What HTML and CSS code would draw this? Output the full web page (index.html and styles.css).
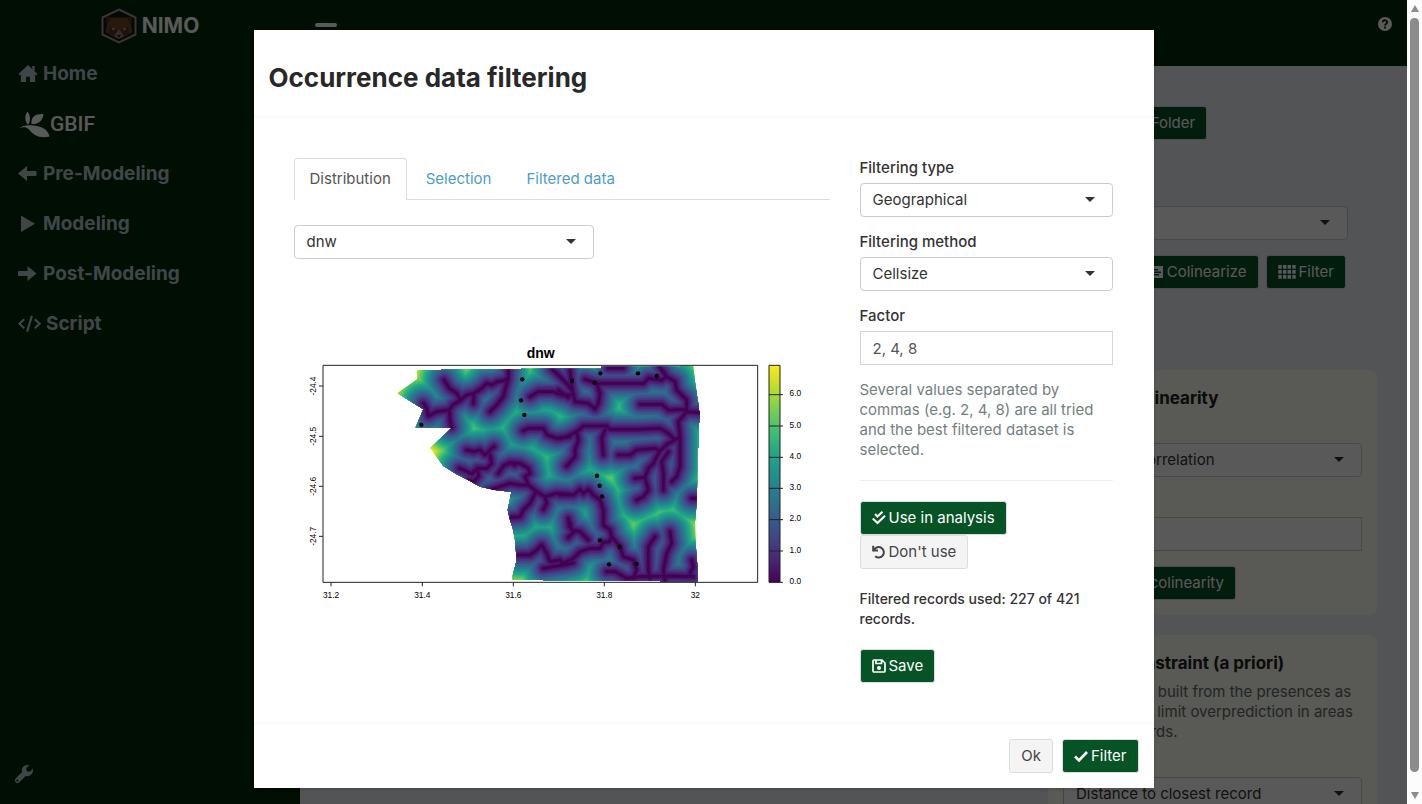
FILE: index.html
```html
<!DOCTYPE html>
<html lang="en">
<head>
<meta charset="utf-8">
<meta name="viewport" content="width=device-width, initial-scale=1">
<title>NIMO</title>
<link rel="stylesheet" href="styles.css">
</head>
<body>
<div class="window">
  <div class="app">
    <aside class="sidebar">
      <div class="brand">
        <svg class="brand-logo" viewBox="0 0 36 36" aria-hidden="true">
          <path d="M18 1.500 34.500 9.500V26.500L18 34.500 1.500 26.500V9.500Z" fill="#0b1a10" stroke="#a89490" stroke-width="2"/>
          <path d="M5 13 6 9 10 9.500 26 9.500 30 9 31 13 30 17 31.500 24 25 28 18 31 11 28 4.500 24 6 17Z" fill="#744629"/>
          <path d="M5 10 9 10 8 14 6 17ZM31 10 27 10 28 14 30 17Z" fill="#4c2d20"/>
          <path d="M9 19 16 21 14 28 8 26ZM27 19 20 21 22 28 28 26Z" fill="#573328"/>
          <path d="M18 21 23 28 18 31 13 28Z" fill="#9d7c6c"/>
          <path d="M16 27h4l-2 2.500Z" fill="#111"/>
          <circle cx="12.500" cy="21" r="1.300" fill="#b8a18f"/><circle cx="23.500" cy="21" r="1.300" fill="#b8a18f"/>
        </svg>
        <span>NIMO</span>
      </div>
      <nav class="menu">
        <a href="#home"><svg class="icon-md" viewBox="0 0 21 20" aria-hidden="true"><path d="M10.500 0.500 20.500 10 19 11.500 18 10.600V18.500H12.500V13H8.500V18.500H3V10.600L2 11.500 0.500 10ZM15 1.500h2.500V7L15 4.500Z"/></svg>Home</a>
        <a href="#gbif" class="gbif"><svg class="icon-gbif" viewBox="0 0 32 27" aria-hidden="true"><path d="M10 14C6 9 7 4 9.500 0.500 13 5 12.500 10 10 14ZM13.500 13C13 6 17 2.500 25.500 3 25 10 20 13.500 13.500 13ZM0.500 17.500C4 14.500 10 13.500 15 14.500 23 15 30 18 31.500 25.500 22 28 15 24 11 18.500 8 15.500 4 16 0.500 17.500Z"/></svg>GBIF</a>
        <a href="#pre"><svg class="icon-md" viewBox="0 0 20 20" aria-hidden="true"><path d="M0 9.500 9 2v5h8.500q1 0 1 1v3q0 1-1 1H9v5Z"/></svg>Pre-Modeling</a>
        <a href="#modeling"><svg class="icon-md" viewBox="0 0 20 20" aria-hidden="true"><path d="M3 1.500V18L17 9.700Z"/></svg>Modeling</a>
        <a href="#post"><svg class="icon-md" viewBox="0 0 20 20" aria-hidden="true"><path d="M18.500 9.500 9.500 2v5H1q-1 0-1 1v3q0 1 1 1h8.500v5Z"/></svg>Post-Modeling</a>
        <a href="#script"><svg class="icon-code" viewBox="0 0 24 20" aria-hidden="true"><path d="M6.500 5 1.500 9.700 6.500 14.500M17.500 5 22.500 9.700 17.500 14.500M14.500 1.500 9.500 18" fill="none" stroke="currentColor" stroke-width="2.200"/></svg>Script</a>
      </nav>
      <button class="settings" aria-label="Settings"><svg class="icon-md" viewBox="0 0 20 20" aria-hidden="true"><path fill-rule="evenodd" d="M1.500 14.500 8 8.300Q7 4 10 2 12.500 0.500 15.500 1L12.200 4.300 12.800 7.200 15.700 7.800 19 4.500Q19.500 8 17.500 10.300 15 12.700 11.700 12L5.300 18.300Q3.500 20 1.700 18.300 0 16.500 1.500 14.500ZM3.300 15.500a1 1 0 1 0 .1 0Z"/></svg></button>
    </aside>
    <div class="page">
      <header class="topbar">
        <button class="collapse" aria-label="Toggle menu"></button>
        <button class="help" aria-label="Help"><svg class="icon-sm" viewBox="0 0 14 14" aria-hidden="true"><circle cx="7" cy="7" r="7" fill="currentColor"/><path d="M4.800 5.300C5 2.500 9.400 2.700 9.200 5.300 9 6.700 7 6.700 7 8.400M7 9.600v2" fill="none" stroke="#03290b" stroke-width="1.800"/></svg></button>
      </header>
      <main class="panel">
        <section class="setup">
          <button class="btn primary"><svg class="icon-sm" viewBox="0 0 14 14" aria-hidden="true"><path fill="currentColor" d="M0 2h5l1.500 2H14v8H0Z"/></svg>Choose Folder</button>
          <div class="select setup-select"><select aria-label="Species"><option></option></select></div>
          <div class="actions">
            <button class="btn primary"><svg class="icon-sm" viewBox="0 0 14 14" aria-hidden="true"><path fill="currentColor" fill-rule="evenodd" d="M1 1h12v12H1ZM3 4v1.500h5V4ZM3 6.500V8h8V6.500ZM3 9v1.500h6V9Z"/></svg>Colinearize</button>
            <button class="btn primary"><svg class="icon-grid" viewBox="0 0 18 14" aria-hidden="true"><path d="M2 0v14M6.700 0v14M11.300 0v14M16 0v14" stroke="currentColor" stroke-width="3.400" stroke-dasharray="3.800 1.200"/></svg>Filter</button>
          </div>
        </section>
        <section class="card">
          <h3>Reduce colinearity</h3>
          <div class="select"><select aria-label="Method"><option>Pearson correlation</option></select></div>
          <input class="text-input" type="text" aria-label="Threshold">
          <button class="btn primary"><svg class="icon-sm" viewBox="0 0 14 14" aria-hidden="true"><path fill="currentColor" d="M1 1h12v3H1ZM1 6h12v3H1ZM1 11h12v2H1Z"/></svg>Reduce colinearity</button>
        </section>
        <section class="card">
          <h3>Spatial constraint (a priori)</h3>
          <p>Areas will be built from the presences as<br>predictors to limit overprediction in areas<br>with no records.</p>
          <div class="select"><select aria-label="Constraint"><option>Distance to closest record</option></select></div>
        </section>
      </main>
    </div>
    <div class="overlay">
      <div class="modal" role="dialog" aria-labelledby="dialog-title">
        <header class="modal-head"><h2 id="dialog-title">Occurrence data filtering</h2></header>
        <div class="modal-body">
          <section class="view">
            <div class="tabs" role="tablist">
              <button class="tab active" role="tab" aria-selected="true">Distribution</button>
              <button class="tab" role="tab">Selection</button>
              <button class="tab" role="tab">Filtered data</button>
            </div>
            <div class="select layer"><select aria-label="Layer"><option>dnw</option></select></div>
            <svg class="plot" viewBox="12 0 1608 810" role="img" aria-label="dnw map">
              <defs>
                <clipPath id="region"><path d="M382 90H453V88H693V86H933V80H1170V77H1209L1215 125 1223 180 1227 200V212L1230 214V245L1226 250V320L1222 330V415L1220 480 1217 530 1215 545 1216 600 1220 650 1223 690V725H1110V722H760V719H667V710L680 660 675 600 668 565 660 540 653 510 664 456 615 450 570 440 535 420 500 403 460 378 420 324 485 264H376L400 208 322 160 382 118Z"/></clipPath>
                <linearGradient id="scale" x1="0" y1="1" x2="0" y2="0">
                  <stop offset="0" stop-color="#440154"/><stop offset=".1" stop-color="#482475"/><stop offset=".2" stop-color="#414487"/><stop offset=".3" stop-color="#355f8d"/><stop offset=".4" stop-color="#2a788e"/><stop offset=".5" stop-color="#21918c"/><stop offset=".6" stop-color="#22a884"/><stop offset=".7" stop-color="#44bf70"/><stop offset=".8" stop-color="#7ad151"/><stop offset=".9" stop-color="#bddf26"/><stop offset="1" stop-color="#fde725"/>
                </linearGradient>
                <g id="rivers">
                  <path d="M462 120 478 145 500 160 512 180 488 195 478 210 480 240 485 262M512 180 530 165 552 160 575 145 590 130 605 135 622 125 642 122 655 112V88M552 160 550 190M400 190 410 205 415 228 440 215 478 210M600 215 620 195 640 170 645 150 655 115M700 272 715 265 760 265 772 285 800 295 840 290M720 170 745 155 790 155 815 165 850 165M785 86 802 102 825 125 845 150"/>
                  <path d="M530 330 552 335 570 330 585 345 602 328 612 320M600 345 605 370 590 385 562 385 545 402 522 390 508 385M562 385 566 408 552 425 535 420M625 400 640 378 660 368 690 370 715 385 720 400 705 410 715 435 690 435 660 430 625 442 595 452M660 368 675 375M715 435 740 455 765 470 800 460 840 463M765 470 770 490 760 508M735 460 720 490 700 510 690 530 665 532M685 645 720 645 740 630 755 615 770 640 780 665 810 660 825 675 850 668M760 685 790 680 820 675M835 535 838 560"/>
                  <path transform="translate(810 0)" d="M-5 150 25 172M30 90 35 140 45 185 85 190 105 207 115 190 120 160 110 130 75 118M110 130H250L265 115 305 120 320 110 300 82M145 84H190M320 110 345 125 350 150 380 180V215L420 218M240 193H305L325 210 380 208M380 215 355 245 360 290 345 300 325 280 300 265 230 268H150L140 258H70L50 275 20 290 0 295M50 275 55 300 45 330 45 350 20 378M135 270 125 295 130 345M175 345H210L230 330 285 325 300 332 325 310 345 300M300 332 290 350 280 370 265 385 255 412 225 415M255 412 265 450 250 470 230 480M325 335 305 365 310 400V450M360 290V380L350 410 335 425M410 475H395"/>
                  <path transform="translate(810 0)" d="M0 465 40 465 60 448 70 460 85 448 100 465 120 480 130 510V555L150 570 155 590 180 620 190 650 220 660 230 690 220 715M155 590 148 605 130 608 120 625 90 625 60 635 40 655 0 675M85 600 60 575 35 570 30 548M25 592 45 572M285 590 265 620V690L270 715M330 575 335 610 320 640 310 690 315 722M395 660 400 680 390 700M140 695H165L200 715 240 710 330 708 400 710"/>
                </g>
              </defs>
              <g clip-path="url(#region)">
                <rect x="300" y="60" width="960" height="680" fill="#fde725"/>
                <g class="bands">
                  <use href="#rivers" stroke="#dfe318" stroke-width="182"/>
                  <use href="#rivers" stroke="#bddf26" stroke-width="173"/>
                  <use href="#rivers" stroke="#9bd93c" stroke-width="164"/>
                  <use href="#rivers" stroke="#7ad151" stroke-width="156"/>
                  <use href="#rivers" stroke="#5ec962" stroke-width="147"/>
                  <use href="#rivers" stroke="#44bf70" stroke-width="138"/>
                  <use href="#rivers" stroke="#2fb47c" stroke-width="128"/>
                  <use href="#rivers" stroke="#22a884" stroke-width="119"/>
                  <use href="#rivers" stroke="#1f9e89" stroke-width="110"/>
                  <use href="#rivers" stroke="#21918c" stroke-width="101"/>
                  <use href="#rivers" stroke="#25848e" stroke-width="91"/>
                  <use href="#rivers" stroke="#2a788e" stroke-width="82"/>
                  <use href="#rivers" stroke="#2f6c8e" stroke-width="73"/>
                  <use href="#rivers" stroke="#355f8d" stroke-width="63"/>
                  <use href="#rivers" stroke="#3b528b" stroke-width="54"/>
                  <use href="#rivers" stroke="#414487" stroke-width="44"/>
                  <use href="#rivers" stroke="#463480" stroke-width="35"/>
                  <use href="#rivers" stroke="#482475" stroke-width="26"/>
                  <use href="#rivers" stroke="#471365" stroke-width="16"/>
                  <use href="#rivers" stroke="#440154" stroke-width="8"/>
                </g>
              </g>
              <g class="records">
                <circle cx="697" cy="118" r="6.500"/><circle cx="693" cy="181" r="6.500"/><circle cx="703" cy="225" r="6.500"/><circle cx="394" cy="254" r="6.500"/>
                <circle cx="846" cy="122" r="6.500"/><circle cx="931" cy="100" r="6.500"/><circle cx="915" cy="128" r="6.500"/><circle cx="1044" cy="100" r="6.500"/><circle cx="1100" cy="108" r="6.500"/>
                <circle cx="921" cy="407" r="6.500"/><circle cx="929" cy="437" r="6.500"/><circle cx="936" cy="469" r="6.500"/><circle cx="930" cy="601" r="6.500"/><circle cx="989" cy="621" r="6.500"/><circle cx="957" cy="673" r="6.500"/><circle cx="1039" cy="672" r="6.500"/>
              </g>
              <rect x="1437" y="76" width="33" height="651" fill="url(#scale)"/>
              <path class="axes" d="M99 76H1403V727H99ZM123 727v12M397 727v12M670 727v12M943 727v12M1216 727v12M99 138H87M99 289H87M99 439H87M99 589H87M1437 76h33v651h-33ZM1437 164h42M1437 258h42M1437 352h42M1437 445h42M1437 539h42M1437 633h42M1470 727h9"/>
              <text class="plot-title" x="752" y="54">dnw</text>
              <g class="ticks">
                <text x="123" y="774">31.2</text><text x="397" y="774">31.4</text><text x="670" y="774">31.6</text><text x="943" y="774">31.8</text><text x="1216" y="774">32</text>
                <text transform="translate(77 138) rotate(-90)">-24.4</text><text transform="translate(77 289) rotate(-90)">-24.5</text><text transform="translate(77 439) rotate(-90)">-24.6</text><text transform="translate(77 589) rotate(-90)">-24.7</text>
                <text x="1516" y="169">6.0</text><text x="1516" y="263">5.0</text><text x="1516" y="357">4.0</text><text x="1516" y="450">3.0</text><text x="1516" y="544">2.0</text><text x="1516" y="638">1.0</text><text x="1516" y="732">0.0</text>
              </g>
            </svg>
          </section>
          <section class="options">
            <label for="type">Filtering type</label>
            <div class="select"><select id="type"><option>Geographical</option></select></div>
            <label for="method">Filtering method</label>
            <div class="select"><select id="method"><option>Cellsize</option></select></div>
            <label for="factor">Factor</label>
            <input class="text-input" id="factor" type="text" value="2, 4, 8">
            <p class="hint">Several values separated by commas (e.g. 2, 4, 8) are all tried and the best filtered dataset is selected.</p>
            <hr>
            <button class="btn primary"><svg class="icon-sm" viewBox="0 0 14 14" aria-hidden="true"><path d="M3 3 5.500 5.500 10.500 0.800M0.800 7.500 5.500 12 13 4.800" fill="none" stroke="currentColor" stroke-width="2.200"/></svg>Use in analysis</button>
            <button class="btn plain"><svg class="icon-sm" viewBox="0 0 14 14" aria-hidden="true"><path d="M1.200 0.800V5.500H6M2 5A5.200 5.200 0 1 1 3.200 11.200" fill="none" stroke="currentColor" stroke-width="2"/></svg>Don't use</button>
            <p class="result">Filtered records used: 227 of 421 records.</p>
            <button class="btn primary"><svg class="icon-sm" viewBox="0 0 14 14" aria-hidden="true"><path d="M1 2q0-1 1-1h8l3 3v8q0 1-1 1H2q-1 0-1-1ZM4 1v3.500h5.500V1" fill="none" stroke="currentColor" stroke-width="1.700"/><circle cx="7" cy="9" r="2" fill="currentColor"/></svg>Save</button>
          </section>
        </div>
        <footer class="modal-foot">
          <button class="btn plain">Ok</button>
          <button class="btn primary"><svg class="icon-sm" viewBox="0 0 14 14" aria-hidden="true"><path d="M1 7.500 5 11.500 13 3" fill="none" stroke="currentColor" stroke-width="2.600"/></svg>Filter</button>
        </footer>
      </div>
    </div>
  </div>
  <div class="scrollbar" aria-hidden="true">
    <span class="arrow-up"></span><span class="thumb"></span><span class="arrow-down"></span>
  </div>
</div>
</body>
</html>
```
FILE: styles.css
```css
* { box-sizing: border-box; }

body {
  margin: 0;
  font: 15px/20px Inter, "Open Sans", sans-serif;
  color: #333;
}

button, input, select { font: inherit; color: inherit; }
button { cursor: pointer; }
svg { display: block; }

.window { display: flex; height: 100vh; overflow: hidden; }
.app { position: relative; flex: 1; display: flex; overflow: hidden; }

/* Sidebar */
.sidebar {
  flex: 0 0 300px;
  display: flex;
  flex-direction: column;
  background: #03290b;
  color: #b8c7ce;
}
.brand {
  display: flex;
  align-items: center;
  justify-content: center;
  gap: 5px;
  height: 49px;
  padding-top: 2px;
  color: #fff;
  font-size: 21px;
  font-weight: 700;
}
.brand-logo { width: 36px; height: 36px; }
.menu { display: flex; flex-direction: column; }
.menu a {
  display: flex;
  align-items: center;
  gap: 5px;
  height: 50px;
  padding-left: 18px;
  color: inherit;
  font-size: 19px;
  font-weight: 700;
  text-decoration: none;
}
.menu svg, .settings svg { fill: currentColor; }
.menu .gbif {
  gap: 0;
  color: #fff;
  font-family: Roboto, sans-serif;
  font-size: 21px;
  font-weight: 500;
}
.settings {
  align-self: flex-start;
  margin: auto 0 20px 14px;
  padding: 0;
  border: 0;
  background: none;
}
.icon-sm { width: 14px; height: 14px; }
.icon-md { width: 20px; height: 20px; }
.icon-code { width: 23px; height: 20px; }
.icon-gbif { width: 32px; height: 27px; }
.icon-grid { width: 18px; height: 14px; }

/* Page behind the dialog */
.page { flex: 1; display: flex; flex-direction: column; background: #ecf0f5; }
.topbar {
  flex: none;
  display: flex;
  justify-content: space-between;
  align-items: flex-start;
  height: 66px;
  padding: 17px 15px;
  background: #03290b;
  color: #fff;
}
.topbar button { padding: 0; border: 0; background: none; color: inherit; }
.topbar .collapse {
  width: 22px;
  height: 4px;
  margin-top: 6px;
  border-radius: 2px;
  background: #fff;
}
.panel {
  align-self: flex-end;
  display: flex;
  flex-direction: column;
  gap: 20px;
  width: 329px;
  margin: 40px 30px 0 0;
}
.setup {
  display: flex;
  flex-direction: column;
  align-items: flex-start;
  height: 244px;
  padding: 0 29px 0 15px;
}
.setup-select { align-self: stretch; margin: 66px 0 15px; }
.actions { display: flex; align-self: flex-end; gap: 7px; padding-right: 2px; }
.card {
  padding: 15px;
  border-radius: 8px;
  background: #fffef2;
}
.card h3 {
  margin: 3px 0 0;
  color: #222;
  font-size: 17px;
  font-weight: 700;
}
.card h3 + .select { margin: 35px 0 40px; }
.card .text-input { margin-bottom: 15px; border-color: #ccc; }
.card p { margin: 9px 0 35px; color: #5e6b6b; white-space: nowrap; }

/* Controls */
.btn {
  display: inline-flex;
  align-items: center;
  gap: 3px;
  height: 34px;
  padding: 0 11px;
  border: 1px solid #ddd;
  border-radius: 3px;
  white-space: nowrap;
}
.btn.primary { background: #065325; color: #fff; }
.btn.plain { background: #f4f4f4; color: #444; }
.select { position: relative; }
.select::after {
  content: "";
  position: absolute;
  top: 14px;
  right: 18px;
  border: 5px solid transparent;
  border-top-color: #333;
  border-bottom: 0;
  pointer-events: none;
}
.select select, .text-input {
  display: block;
  width: 100%;
  height: 34px;
  padding: 0 12px;
  border: 1px solid #ccc;
  border-radius: 4px;
  background: #fff;
}
.select select { appearance: none; }
.text-input { border-color: #d2d6de; border-radius: 0; color: #555; }

/* Dialog */
.overlay { position: absolute; inset: 0; background: rgba(0, 0, 0, .65); }
.modal {
  width: 900px;
  max-width: 100%;
  margin: 30px auto;
  background: #fff;
  box-shadow: 0 2px 3px rgba(0, 0, 0, .13);
}
.modal-head { padding: 33px 15px 24px; border-bottom: 1px solid #f4f4f4; }
.modal-head h2 {
  margin: 0;
  color: #282828;
  font-size: 26px;
  line-height: 29px;
  font-weight: 700;
}
.modal-body {
  display: grid;
  grid-template-columns: 536fr 253fr;
  gap: 30px;
  padding: 41px 41px 40px 40px;
}
.view { min-width: 0; }
.tabs { display: flex; gap: 3px; border-bottom: 1px solid #ddd; }
.tab {
  height: 42px;
  margin-bottom: -1px;
  padding: 0 15px;
  border: 1px solid transparent;
  border-radius: 4px 4px 0 0;
  background: none;
  color: #4c9dcb;
}
.tab.active { border-color: #ddd #ddd #fff; background: #fff; color: #555; }
.layer { width: 300px; margin-top: 25px; }
.plot { width: 100%; margin-top: 81px; }
.bands { fill: none; stroke-linecap: round; stroke-linejoin: round; }
.axes { fill: none; stroke: #222; stroke-width: 3; }
.ticks, .plot-title { font-family: "Liberation Sans", sans-serif; text-anchor: middle; }
.ticks { font-size: 25px; }
.plot-title { font-size: 42px; font-weight: 700; }

.options { display: flex; flex-direction: column; align-items: flex-start; }
.options label { margin-bottom: 5px; font-weight: 500; }
.options .select, .options .text-input { width: 100%; margin-bottom: 15px; }
.hint { margin: 0; color: #737f7f; }
.options hr {
  width: 100%;
  margin: 20px 0;
  border: 0;
  border-top: 1px solid #eee;
}
.result { margin: 20px 0; font-size: 14px; font-weight: 500; }
.modal-foot {
  display: flex;
  justify-content: flex-end;
  gap: 9px;
  padding: 15px;
  border-top: 1px solid #f4f4f4;
}

/* Window scrollbar */
.scrollbar {
  flex: 0 0 15px;
  display: flex;
  flex-direction: column;
  align-items: center;
  gap: 6px;
  padding: 5px 0;
  background: #fcfcfc;
}
.thumb { flex: 1; width: 9px; margin-bottom: 14px; border-radius: 5px; background: #8b8b8b; }
.arrow-up, .arrow-down { border: 4px solid transparent; }
.arrow-up { border-top: 0; border-bottom: 7px solid #8b8b8b; }
.arrow-down { border-bottom: 0; border-top: 7px solid #8b8b8b; }
```
